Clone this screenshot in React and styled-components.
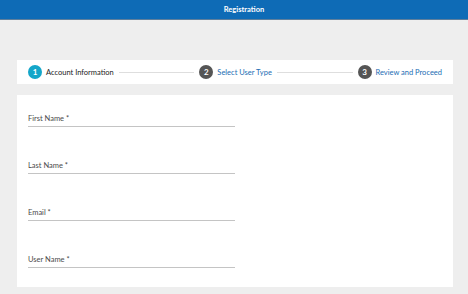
import React from 'react';
import styled, { createGlobalStyle } from 'styled-components';

const GlobalStyle = createGlobalStyle`
  html, body {
    margin: 0;
    padding: 0;
    background: #eeeeee;
    font-family: Lato, "Open Sans", "Liberation Sans", sans-serif;
  }
`;

const Page = styled.div`
  width: 468px;
  height: 294px;
  background: #eeeeee;
  overflow: hidden;
`;

const Header = styled.header`
  height: 19px;
  background: #0e6bb6;
  border-bottom: 1px solid #5f7f9c;
  display: flex;
  align-items: center;
  justify-content: center;
  padding-left: 20px;
  color: #fff;
  font-size: 7.5px;
  font-weight: 700;
`;

const Content = styled.main`
  padding: 40px 15px 0 17px;
  display: flex;
  flex-direction: column;
  gap: 11px;
`;

const Stepper = styled.div`
  height: 24px;
  background: #fff;
  display: flex;
  align-items: center;
  padding: 0 11px;
`;

const Step = styled.div`
  display: flex;
  align-items: center;
  gap: 4px;
  font-size: 7.5px;
  white-space: nowrap;
  color: ${(p) => (p.$active ? '#222' : '#1b6db3')};
`;

const Circle = styled.span`
  width: 14px;
  height: 14px;
  border-radius: 50%;
  background: ${(p) => (p.$active ? '#14a6c9' : '#555')};
  color: #fff;
  font-size: 8px;
  font-weight: 700;
  display: flex;
  align-items: center;
  justify-content: center;
`;

const Line = styled.span`
  flex: 1;
  height: 1px;
  background: #dedede;
  margin: 0 5px;
`;

const FormCard = styled.section`
  background: #fff;
  padding: 19px 11px;
  display: flex;
  flex-direction: column;
  gap: 34px;
`;

const Field = styled.div`
  width: 207px;
`;

const Label = styled.label`
  display: block;
  font-size: 7.5px;
  line-height: 10px;
  color: #4a4a4a;
  margin-bottom: 2px;
`;

const Underline = styled.div`
  border-bottom: 1px solid #c4c4c4;
`;

const steps = [
  { n: 1, label: 'Account Information', active: true },
  { n: 2, label: 'Select User Type' },
  { n: 3, label: 'Review and Proceed' },
];

const fields = ['First Name *', 'Last Name *', 'Email *', 'User Name *'];

export default function App() {
  return (
    <Page>
      <GlobalStyle />
      <Header>Registration</Header>
      <Content>
        <Stepper>
          {steps.map((s, i) => (
            <React.Fragment key={s.n}>
              {i > 0 && <Line />}
              <Step $active={s.active}>
                <Circle $active={s.active}>{s.n}</Circle>
                {s.label}
              </Step>
            </React.Fragment>
          ))}
        </Stepper>
        <FormCard>
          {fields.map((f) => (
            <Field key={f}>
              <Label>{f}</Label>
              <Underline />
            </Field>
          ))}
        </FormCard>
      </Content>
    </Page>
  );
}
